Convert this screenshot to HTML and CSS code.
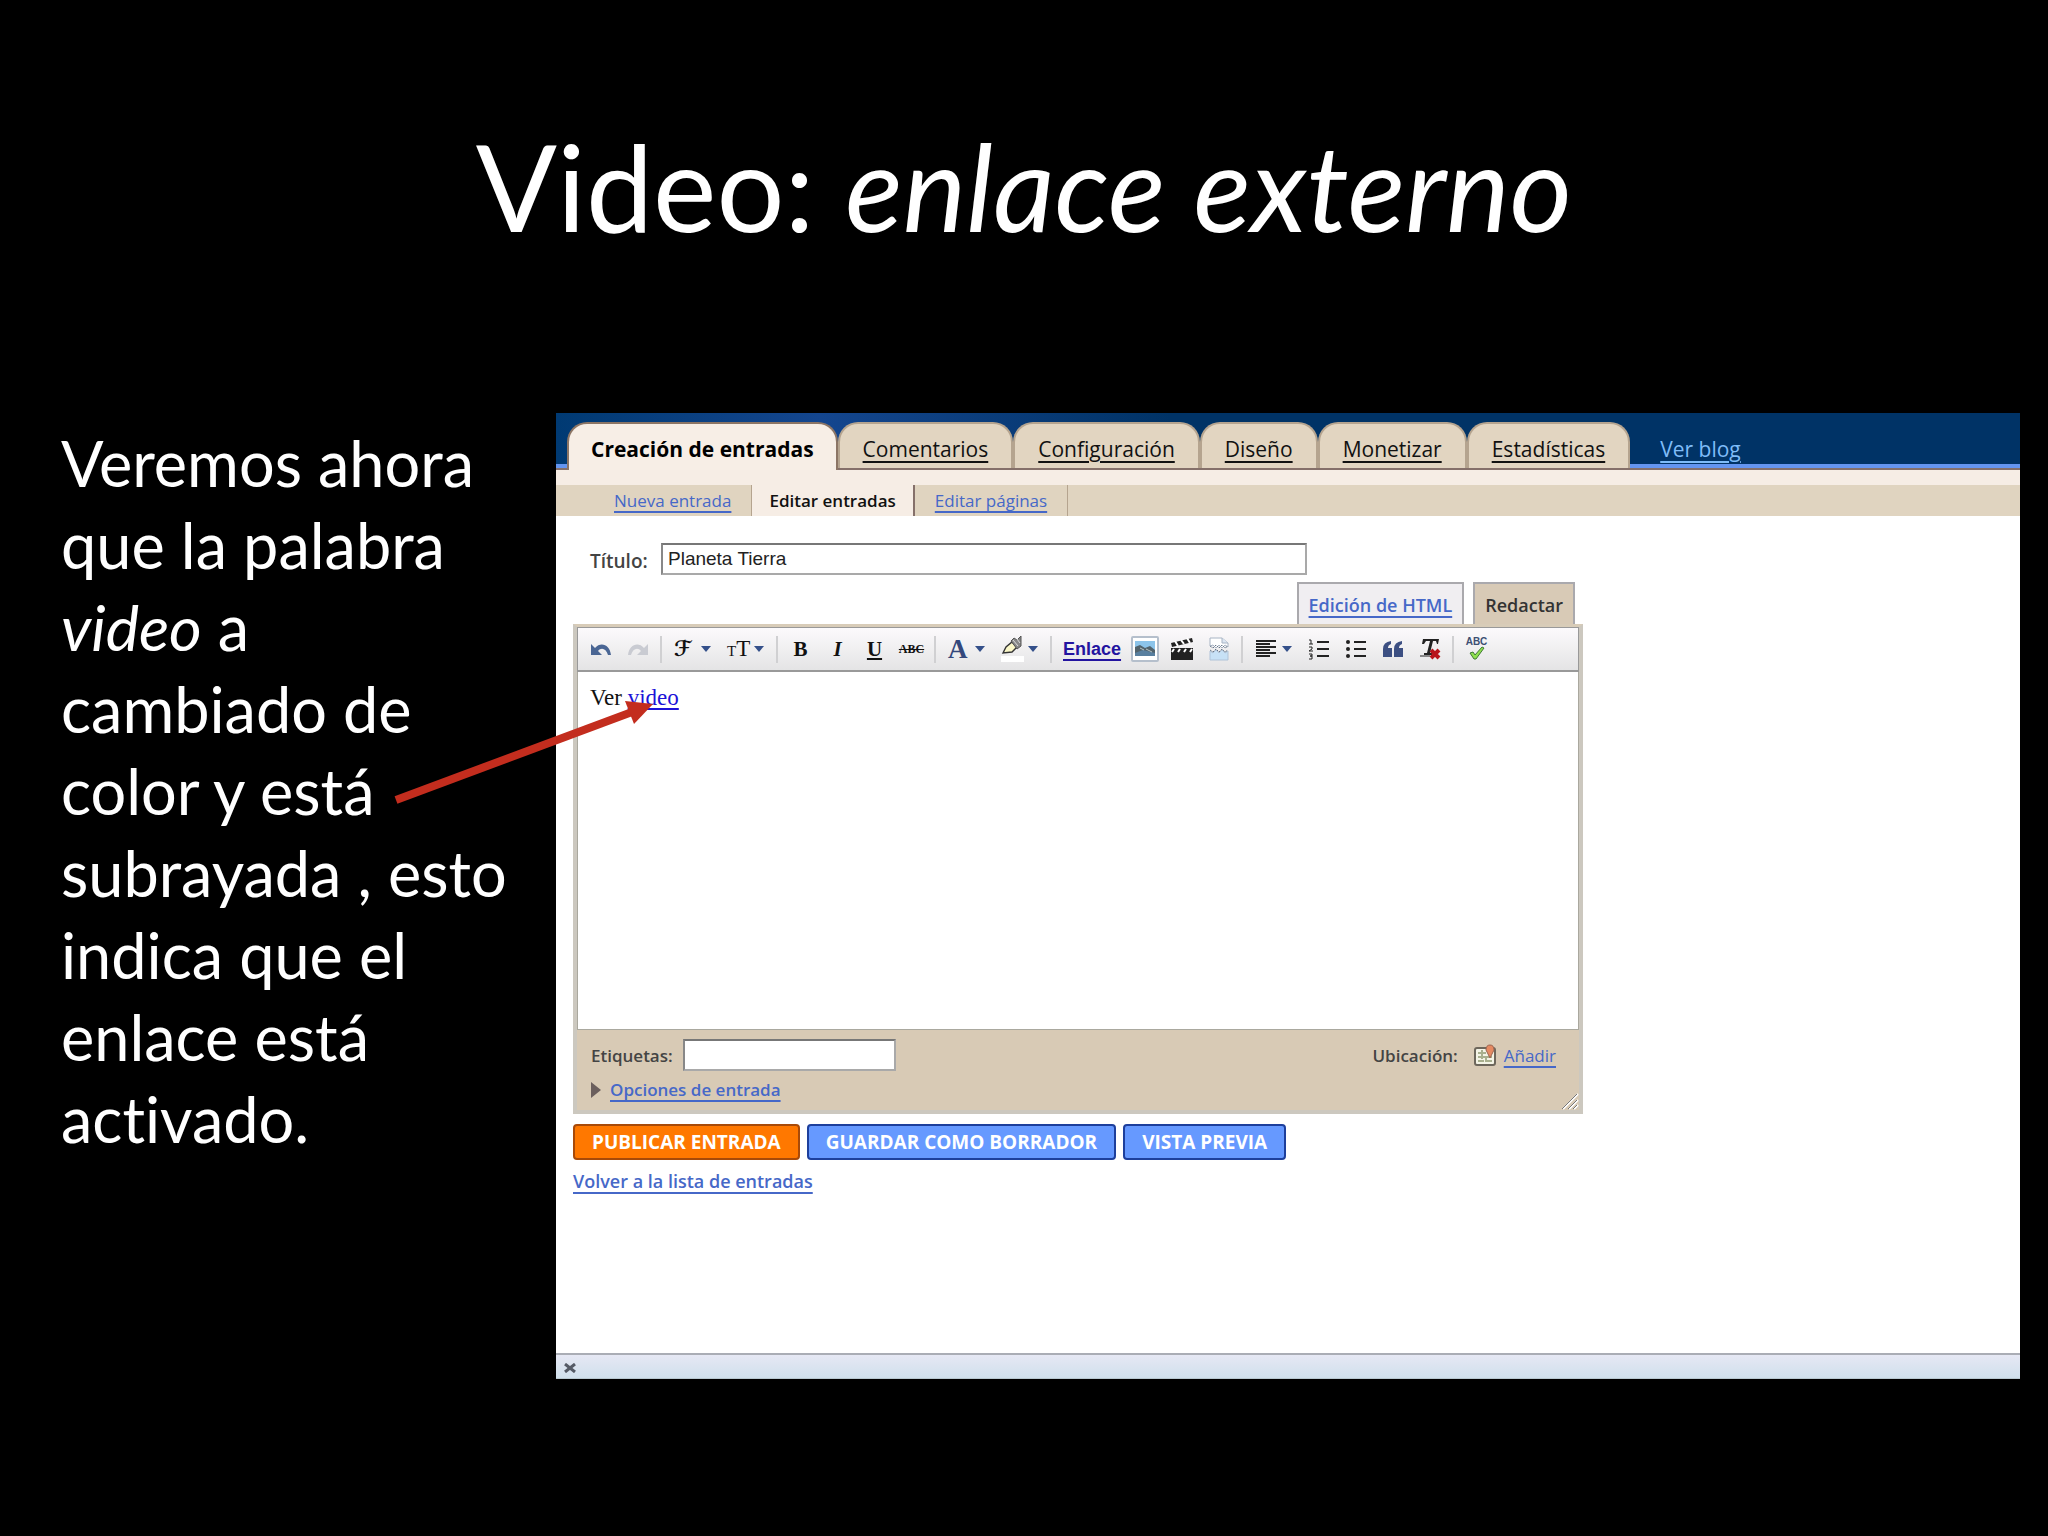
FILE: index.html
```html
<!DOCTYPE html>
<html lang="es">
<head>
  <meta charset="UTF-8">
  <meta name="viewport" content="width=device-width, initial-scale=1">
  <title>Video: enlace externo</title>
  <link rel="stylesheet" href="styles.css">
</head>
<body>
  <main class="slide">
    <h1 class="slide-title">Video: <em>enlace externo</em></h1>

    <div class="slide-content">
      <p class="slide-text">Veremos ahora que la palabra <em>video</em> a cambiado de color y está subrayada , esto indica que el enlace está activado.</p>

      <section class="blogger">
        <nav class="tabs">
          <a href="#" class="tab active">Creación de entradas</a>
          <a href="#" class="tab">Comentarios</a>
          <a href="#" class="tab">Configuración</a>
          <a href="#" class="tab">Diseño</a>
          <a href="#" class="tab">Monetizar</a>
          <a href="#" class="tab">Estadísticas</a>
          <a href="#" class="view-blog">Ver blog</a>
        </nav>
        <nav class="subtabs">
          <a href="#" class="subtab">Nueva entrada</a>
          <a href="#" class="subtab active">Editar entradas</a>
          <a href="#" class="subtab">Editar páginas</a>
        </nav>

        <form class="post-form" onsubmit="return false">
          <div class="title-row">
            <label for="title">Título:</label>
            <input type="text" id="title" value="Planeta Tierra">
          </div>

          <div class="mode-tabs">
            <a href="#" class="mode">Edición de HTML</a>
            <a href="#" class="mode active">Redactar</a>
          </div>

          <div class="editor">
            <div class="toolbar">
              <button type="button" class="tool" aria-label="Deshacer">
                <svg width="22" height="16" viewBox="0 0 22 16"><path d="M1 3v11h11l-4-4c3-4 8-3 10 4h3C20 4 11 0 5 7z" fill="#4a6694"/></svg>
              </button>
              <button type="button" class="tool" aria-label="Rehacer">
                <svg width="22" height="16" viewBox="0 0 22 16"><path d="M21 3v11H10l4-4C11 6 6 7 4 14H1C2 4 11 0 17 7z" fill="#c9cbd2"/></svg>
              </button>
              <span class="sep"></span>
              <button type="button" class="tool menu" aria-label="Fuente">
                <span class="glyph script">ℱ</span>
                <svg class="caret" width="10" height="6"><path d="M0 0h10L5 6z"/></svg>
              </button>
              <button type="button" class="tool menu" aria-label="Tamaño">
                <span class="glyph size"><small>T</small>T</span>
                <svg class="caret" width="10" height="6"><path d="M0 0h10L5 6z"/></svg>
              </button>
              <span class="sep"></span>
              <button type="button" class="tool"><b>B</b></button>
              <button type="button" class="tool"><b><i>I</i></b></button>
              <button type="button" class="tool"><b><u>U</u></b></button>
              <button type="button" class="tool strike"><s>ABC</s></button>
              <span class="sep"></span>
              <button type="button" class="tool menu" aria-label="Color del texto">
                <span class="glyph color">A</span>
                <svg class="caret" width="10" height="6"><path d="M0 0h10L5 6z"/></svg>
              </button>
              <button type="button" class="tool menu" aria-label="Color de fondo">
                <svg class="glyph" width="24" height="26" viewBox="0 0 24 26">
                  <path d="M0 20h23v6H0z" fill="#fff"/>
                  <path d="M2 17l3-6 6-5 5 5-5 5z" fill="#fbf8c9" stroke="#333" stroke-width="1.4"/>
                  <path d="M10 5l3-3 3 2 4-4v10l-4 3z" fill="#888" stroke="#555"/>
                  <path d="M12 4l5 6M16 3l3 4" stroke="#ddd"/>
                </svg>
                <svg class="caret" width="10" height="6"><path d="M0 0h10L5 6z"/></svg>
              </button>
              <span class="sep"></span>
              <a href="#" class="tool-link">Enlace</a>
              <button type="button" class="tool" aria-label="Imagen">
                <svg width="28" height="26" viewBox="0 0 28 26">
                  <rect x="1" y="1" width="26" height="24" rx="1" fill="#fff" stroke="#b5bfcc" stroke-width="2"/>
                  <path d="M4 5h20v15H4z" fill="#8cc4ea"/>
                  <path d="M4 11l5-2 5 3 5-2 5 4v6H4z" fill="#52636c"/>
                  <path d="M4 17l8-3 12 3v3H4z" fill="#587f9f"/>
                  <path d="M9 12l4 2M15 13l6 3" stroke="#b7c3c5"/>
                </svg>
              </button>
              <button type="button" class="tool" aria-label="Vídeo">
                <svg width="24" height="24" viewBox="0 0 24 24">
                  <path d="M1 11h22v12H1z" fill="#222"/>
                  <path d="M1 6l21-5 1 4L2 10z" fill="#222"/>
                  <path d="M5 4l3 5M11 3l3 4M17 1l3 5M4 12l-2 3M10 12l-2 3M16 12l-2 3M22 12l-2 3" stroke="#fff" stroke-width="2"/>
                </svg>
              </button>
              <button type="button" class="tool" aria-label="Salto de página">
                <svg width="20" height="24" viewBox="0 0 20 24">
                  <path d="M1 9V1h12l6 5v4l-3-2-3 3-3-3-3 3-3-3z" fill="#fff" stroke="#a8b4c4"/>
                  <path d="M13 1v5h6" fill="#dce6f2" stroke="#a8b4c4"/>
                  <path d="M1 14l3 2 3-3 3 3 3-3 3 3 3-2v9H1z" fill="#c7e1f6" stroke="#b0c3d8"/>
                  <path d="M1 9l3 2 3-3 3 3 3-3 3 3 3-2M1 13l3 2 3-3 3 3 3-3 3 3 3-2" fill="none" stroke="#68788a" stroke-dasharray="2 1"/>
                </svg>
              </button>
              <span class="sep"></span>
              <button type="button" class="tool menu" aria-label="Alineación">
                <svg class="glyph" width="24" height="18" viewBox="0 0 24 18"><path d="M1 1h20M1 4h14M1 7h20M1 10h14M1 13h20M1 16h14" stroke="#222" stroke-width="2"/></svg>
                <svg class="caret" width="10" height="6"><path d="M0 0h10L5 6z"/></svg>
              </button>
              <button type="button" class="tool" aria-label="Lista numerada">
                <svg width="22" height="22" viewBox="0 0 22 22">
                  <path d="M9 4h12M9 11h12M9 18h12" stroke="#222" stroke-width="2"/>
                  <path d="M1 2h2v4M1 6h4M1 9h3v2L1 13h4M1 16h3v2H2h2v3H1" fill="none" stroke="#222"/>
                </svg>
              </button>
              <button type="button" class="tool" aria-label="Lista con viñetas">
                <svg width="22" height="20" viewBox="0 0 22 20">
                  <path d="M9 3h12M9 10h12M9 17h12" stroke="#222" stroke-width="2"/>
                  <g fill="#222"><circle cx="3" cy="3" r="2"/><circle cx="3" cy="10" r="2"/><circle cx="3" cy="17" r="2"/></g>
                </svg>
              </button>
              <button type="button" class="tool" aria-label="Cita">
                <svg width="20" height="16" viewBox="0 0 20 16"><path d="M0 16V8q0-7 8-8v3Q5 4 5 7h4v9zM11 16V8q0-7 8-8v3q-3 1-3 4h4v9z" fill="#3c4f82"/></svg>
              </button>
              <button type="button" class="tool" aria-label="Quitar formato">
                <svg width="22" height="22" viewBox="0 0 22 22">
                  <path d="M4 1h16l-1 5h-1l-1-3h-3l-3 12h2v2H5v-2h3l3-12H7L5 6H3z" fill="#222"/>
                  <path d="M1 18h10" stroke="#222"/>
                  <path d="M12 12l8 8M20 12l-8 8" stroke="#b8141c" stroke-width="4"/>
                </svg>
              </button>
              <span class="sep"></span>
              <button type="button" class="tool spell">
                <span>ABC</span>
                <svg width="16" height="14" viewBox="0 0 16 14"><path d="M1 7l3-1 2 3 7-8 2 1-8 11H5z" fill="#8fe04f" stroke="#3f7a35"/></svg>
              </button>
            </div>

            <div class="post-body" contenteditable="true" role="textbox" aria-label="Entrada">Ver <a href="#">video</a></div>

            <div class="post-footer">
              <div class="footer-row">
                <label for="tags">Etiquetas:</label>
                <input type="text" id="tags">
                <span class="location">Ubicación:</span>
                <svg width="22" height="22" viewBox="0 0 22 22">
                  <rect x="1" y="4" width="20" height="17" rx="2" fill="#f4f4e6" stroke="#6d675c" stroke-width="2"/>
                  <path d="M4 9h8M4 13h14M4 17h6M12 17h6M8 6v9M12 12v6" stroke="#a9b08e" stroke-width="2"/>
                  <path d="M16 14l-4-8q0-5 4-5t4 5z" fill="#e58a62" stroke="#9a6550"/>
                </svg>
                <a href="#">Añadir</a>
              </div>
              <div class="options-row">
                <svg width="10" height="16" viewBox="0 0 10 16"><path d="M0 0l10 8-10 8z" fill="#6b5f5d"/></svg>
                <a href="#">Opciones de entrada</a>
              </div>
              <svg class="grip" width="18" height="18" viewBox="0 0 18 18">
                <path d="M2 17L17 2M8 17l9-9M13 17l4-4" stroke="#fff" stroke-width="2"/>
                <path d="M1 17L16 2M7 17l9-9M12 17l4-4" stroke="#777"/>
              </svg>
            </div>
          </div>

          <div class="actions">
            <button type="submit" class="btn publish">PUBLICAR ENTRADA</button>
            <button type="button" class="btn">GUARDAR COMO BORRADOR</button>
            <button type="button" class="btn">VISTA PREVIA</button>
          </div>
          <a href="#" class="back">Volver a la lista de entradas</a>
        </form>

        <footer class="status-bar">
          <button type="button" aria-label="Cerrar">
            <svg width="12" height="10" viewBox="0 0 12 10"><path d="M1 1l10 8M11 1L1 9" stroke="#555b66" stroke-width="3"/></svg>
          </button>
        </footer>

        <!-- flecha que señala el enlace -->
        <svg class="pointer" width="260" height="102" viewBox="0 0 260 102">
          <path d="M2 98L238 10" stroke="#c32d1e" stroke-width="8"/>
          <path d="M259 2L231 -1L240 22z" fill="#c32d1e"/>
        </svg>
      </section>
    </div>
  </main>
</body>
</html>
```
FILE: styles.css
```css
* {
  box-sizing: border-box;
}

body {
  margin: 0;
  background: #000;
  color: #fff;
  font-family: "Open Sans", "Noto Sans", sans-serif;
}

a {
  color: #4668c8;
  text-decoration-thickness: 2px;
  text-underline-offset: 4px;
}

button {
  font: inherit;
  cursor: pointer;
}

.slide {
  display: flex;
  flex-direction: column;
  min-height: 100vh;
  padding: 106px 28px 157px 61px;
}

.slide-title {
  margin: 0 0 147px;
  padding-right: 33px;
  font-family: Lato, sans-serif;
  font-size: 120px;
  font-weight: 400;
  line-height: 160px;
  text-align: center;
}

.slide-content {
  display: flex;
  flex: 1;
}

.slide-text {
  flex: 0 0 495px;
  margin: 0;
  padding: 9px 38px 0 0;
  font-family: Lato, sans-serif;
  font-size: 63px;
  font-variant-ligatures: none;
  line-height: 82px;
}

.blogger {
  position: relative;
  display: flex;
  flex: 1;
  flex-direction: column;
  min-width: 0;
  background: #fff;
  color: #444;
}

/* pestañas */
.tabs {
  display: flex;
  height: 57px;
  padding: 9px 11px 0;
  border-bottom: 2px solid #85706a;
  background: linear-gradient(#6495f0, #6495f0) bottom / 100% 4px no-repeat,
    linear-gradient(to right, #003a73, #14468f 18%, #003366 42%);
  font-size: 21px;
  line-height: 36px;
}

.tab {
  padding: 7px 23px 0;
  border: 2px solid #b5a48f;
  border-bottom: 0;
  border-radius: 20px 20px 0 0;
  background: #e2d5c1;
  color: #111;
}

.tab.active {
  height: 48px;
  padding: 7px 22px 0;
  border-color: #8c7565;
  background: #f7eee6;
  color: #000;
  font-weight: 700;
  text-decoration: none;
}

.view-blog {
  padding: 9px 30px 0;
  color: #7fbcf8;
}

.subtabs {
  display: flex;
  height: 46px;
  padding-left: 38px;
  border-top: 15px solid #f6ede5;
  background: #e0d4c0;
  font-size: 17px;
  line-height: 32px;
}

.subtab {
  padding: 0 20px;
  border-right: 1px solid #b5a48f;
}

.subtab.active {
  padding: 0 17px;
  border-right: 2px solid #85706a;
  background: #f6ede5;
  color: #111;
  font-weight: 600;
  text-decoration: none;
}

/* formulario */
.post-form {
  flex: 1;
  width: 1027px;
  max-width: 100%;
  padding: 27px 0 0 17px;
}

input {
  height: 32px;
  padding: 0 5px;
  border: 2px solid #a9a9a9;
  border-top-color: #777;
  border-left-color: #888;
  background: #fff;
  color: #222;
  font: 19px "Liberation Sans", Arial, sans-serif;
}

.title-row {
  display: flex;
  align-items: center;
  padding-left: 17px;
  font-size: 19px;
  font-weight: 600;
}

.title-row label {
  width: 71px;
  padding-top: 3px;
}

#title {
  width: 646px;
}

.mode-tabs {
  display: flex;
  justify-content: flex-end;
  gap: 9px;
  padding: 7px 8px 0 0;
  font-size: 18px;
  font-weight: 600;
  line-height: 42px;
}

.mode {
  height: 42px;
  padding: 0 10px;
  border: 2px solid #aaa9ad;
  border-bottom: 0;
  background: #f0eef1;
}

.mode.active {
  background: #d8cab6;
  color: #333;
  text-decoration: none;
}

.editor {
  border: 4px solid #ccc8bf;
  border-top: 3px solid #d8ccb8;
  background: #d8cab5;
}

.toolbar {
  display: flex;
  align-items: center;
  height: 45px;
  padding: 0 4px;
  border: 1px solid #999;
  border-bottom: 2px solid #999;
  background: linear-gradient(#fcfafc, #e4e4e5);
  font-family: "Liberation Serif", serif;
}

.tool {
  display: flex;
  flex: none;
  align-items: center;
  justify-content: center;
  width: 37px;
  height: 40px;
  padding: 0;
  border: 0;
  background: none;
  color: #111;
  font-size: 21px;
}

.tool.menu {
  justify-content: flex-start;
  gap: 3px;
  width: 53px;
  padding-left: 8px;
}

.glyph {
  flex: none;
  width: 24px;
  text-align: left;
}

.script {
  font-family: "DejaVu Sans", sans-serif;
  font-weight: 700;
}

.size {
  font-size: 23px;
}

.size small {
  font-size: 15px;
}

.color {
  color: #34487c;
  font-size: 27px;
  font-weight: 700;
  line-height: 24px;
}

.caret {
  fill: #34508a;
}

.strike {
  font-size: 12px;
  font-weight: 700;
}

.sep {
  flex: none;
  width: 2px;
  height: 27px;
  margin: 0 4px;
  background: #d0d0d2;
}

.tool-link {
  flex: none;
  width: 70px;
  padding-left: 7px;
  color: #2314a0;
  font: bold 18px "Liberation Sans", Arial, sans-serif;
}

.spell {
  flex-direction: column;
  color: #3c4f72;
  font: bold 10px/8px "Liberation Sans", Arial, sans-serif;
}

.post-body {
  height: 358px;
  padding: 12px;
  border: 1px solid #aaa89e;
  border-top: 0;
  background: #fff;
  color: #111;
  font: 23px/28px "Liberation Serif", "Times New Roman", serif;
}

.post-body a {
  color: #1c12d8;
  text-underline-offset: 3px;
}

.post-footer {
  position: relative;
  height: 80px;
  padding: 9px 23px 0 14px;
  font-size: 17px;
}

.footer-row,
.options-row {
  display: flex;
  align-items: center;
}

.footer-row label {
  width: 92px;
  font-weight: 600;
}

#tags {
  width: 213px;
}

.location {
  margin: 0 16px 0 auto;
  font-weight: 600;
}

.footer-row a {
  margin-left: 8px;
}

.options-row {
  gap: 9px;
  padding-top: 7px;
  font-weight: 600;
}

.grip {
  position: absolute;
  right: 0;
  bottom: 0;
}

.actions {
  display: flex;
  gap: 7px;
  padding: 10px 0 9px;
}

.btn {
  height: 36px;
  padding: 0 17px;
  border: 2px solid #1d3f9c;
  border-radius: 4px;
  background: #6699ff;
  color: #fff;
  font-size: 19px;
  font-weight: 700;
  line-height: 30px;
}

.btn.publish {
  border-color: #a84a08;
  background: #ff7800;
}

.back {
  font-size: 18px;
  font-weight: 600;
}

.status-bar {
  display: flex;
  align-items: center;
  height: 26px;
  padding-left: 8px;
  border-top: 2px solid #aaadb5;
  border-bottom: 1px solid #b8c8d0;
  background: linear-gradient(#e6e8f4, #d0e0ec);
}

.status-bar button {
  display: flex;
  padding: 2px 0 0;
  border: 0;
  background: none;
}

.pointer {
  position: absolute;
  top: 289px;
  left: -162px;
  overflow: visible;
  pointer-events: none;
}
```
